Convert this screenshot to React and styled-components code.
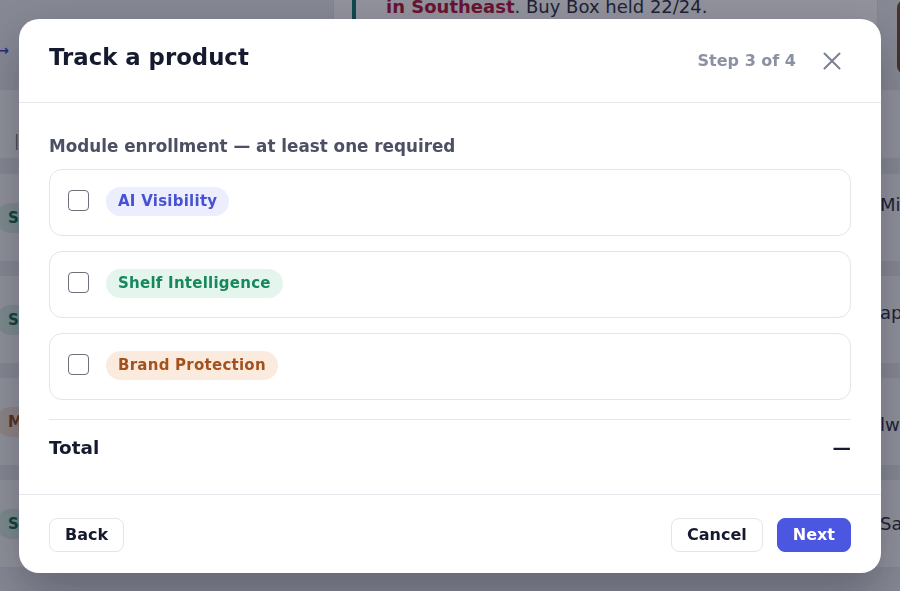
import React, { useState } from 'react';
import styled, { createGlobalStyle } from 'styled-components';

// styles
const Global = createGlobalStyle`
  html, body { margin: 0; padding: 0; }
  body {
    font-family: "DejaVu Sans", "Liberation Sans", sans-serif;
    background: #e7e9ef;
    overflow: hidden;
  }
  * { box-sizing: border-box; }
`

const Page = styled.div`
  width: 900px;
  height: 591px;
  display: flex;
  flex-direction: column;
  overflow: hidden;
`
const TopArea = styled.div`
  height: 70px;
  display: flex;
  align-items: flex-start;
`
const BackLinkCol = styled.div`
  flex-shrink: 0;
  width: 9px;
  margin-top: 42px;
  overflow: hidden;
  display: flex;
  justify-content: flex-end;
  white-space: nowrap;
  color: #3d45c9;
  font-size: 14px;
  font-weight: bold;
`
const AlertCard = styled.div`
  flex-shrink: 0;
  margin-left: 324px;
  width: 545px;
  height: 64px;
  background: #fbfbfd;
  border: 1px solid #dfe2e8;
  border-top: 0;
  padding: 0 0 0 18px;
  display: flex;
`
const AlertBody = styled.div`
  border-left: 4px solid #0f766e;
  padding: 0 0 0 30px;
  margin-top: -6px;
  font-size: 18px;
  line-height: 26px;
  color: #2b2f45;
  strong { color: #b3123c; }
`
const Avatar = styled.div`
  flex-shrink: 0;
  margin-left: 19px;
  width: 40px;
  height: 74px;
  border-radius: 8px;
  background: #7a4a2c;
`
const HeadRow = styled.div`
  margin-top: 20px;
  height: 68px;
  background: #fafbfc;
  display: flex;
  align-items: center;
  padding: 32px 0 0 14px;
  color: #777;
`
const Rows = styled.div`
  margin-top: 16px;
  display: flex;
  flex-direction: column;
  gap: 15px;
`
const BgRow = styled.div`
  height: 87px;
  background: #fafbfc;
  display: flex;
  align-items: center;
`
const StatusPill = styled.span`
  margin-left: -4px;
  width: 120px;
  height: 30px;
  border-radius: 15px;
  padding-left: 12px;
  display: flex;
  align-items: center;
  font-size: 15px;
  font-weight: bold;
  color: ${p => p.$tone === 'm' ? '#9a4b1c' : '#0f6e55'};
  background: ${p => p.$tone === 'm' ? '#f6e3d6' : '#d8efe6'};
`
const BgText = styled.span`
  margin-left: auto;
  margin-bottom: ${p => p.$lift}px;
  width: 20px;
  overflow: hidden;
  white-space: nowrap;
  font-size: 18px;
  color: #2b2f45;
`

const Overlay = styled.div`
  position: fixed;
  inset: 0;
  background: rgba(18, 20, 38, 0.45);
  display: flex;
  align-items: center;
  justify-content: center;
`
const Modal = styled.div`
  width: 862px;
  background: #fff;
  border-radius: 20px;
  box-shadow: 0 20px 50px rgba(10, 12, 30, 0.3);
  overflow: hidden;
`
const Header = styled.div`
  height: 84px;
  border-bottom: 1px solid #e4e6ec;
  display: flex;
  align-items: center;
  padding: 0 30px;
`
const Title = styled.h2`
  margin: 0 0 6px;
  font-size: 22.8px;
  font-weight: bold;
  color: #151a2e;
`
const Step = styled.span`
  margin-left: auto;
  font-size: 16px;
  font-weight: bold;
  color: #8b90a3;
`
const CloseBtn = styled.button`
  margin: 2px 9px 0 25px;
  width: 21px;
  height: 21px;
  padding: 0;
  border: 0;
  background: none;
  color: #7b8091;
  display: flex;
  align-items: center;
  justify-content: center;
  cursor: pointer;
`
const Body = styled.div`
  padding: 33px 30px 0;
`
const Label = styled.div`
  font-size: 16.8px;
  line-height: 20px;
  font-weight: bold;
  color: #4b5064;
  margin-bottom: 13px;
`
const ModuleList = styled.div`
  display: flex;
  flex-direction: column;
  gap: 15px;
`
const ModuleRow = styled.label`
  height: 67px;
  border: 1.5px solid #e3e5ea;
  border-radius: 13px;
  display: flex;
  align-items: center;
  padding: 0 0 0 18px;
  cursor: pointer;
`
const Check = styled.input`
  appearance: none;
  margin: 0 17px 4px 0;
  width: 21px;
  height: 21px;
  border: 1.5px solid #6d707b;
  border-radius: 4px;
  background: #fff;
  &:checked { background: #4b57e0; border-color: #4b57e0; }
`
const tones = {
  ai: { bg: '#ecedfd', fg: '#4751d4' },
  shelf: { bg: '#e4f5ee', fg: '#17875c' },
  brand: { bg: '#fbebdf', fg: '#a4521d' },
}
const Pill = styled.span`
  height: 29px;
  margin-bottom: 2px;
  padding: 0 12px;
  border-radius: 15px;
  display: inline-flex;
  align-items: center;
  font-size: 15px;
  font-weight: bold;
  letter-spacing: 0.25px;
  background: ${p => tones[p.$tone].bg};
  color: ${p => tones[p.$tone].fg};
`
const TotalRow = styled.div`
  margin-top: 19px;
  border-top: 1.5px solid #e4e6ec;
  display: flex;
  align-items: center;
  justify-content: space-between;
  padding: 16px 0 34px;
  font-size: 18.4px;
  line-height: 24px;
  font-weight: bold;
  color: #151a2e;
`
const Footer = styled.div`
  border-top: 1px solid #e4e6ec;
  padding: 23px 30px 21px;
  display: flex;
  align-items: center;
  gap: 14px;
`
const Button = styled.button`
  height: 34px;
  padding: 0 15px;
  border-radius: 8px;
  font-family: inherit;
  font-size: 16px;
  font-weight: bold;
  cursor: pointer;
  border: 1.5px solid ${p => p.$primary ? '#4b57e0' : '#e3e5ea'};
  background: ${p => p.$primary ? '#4b57e0' : '#fff'};
  color: ${p => p.$primary ? '#fff' : '#151a2e'};
  ${p => p.$push && 'margin-left: auto;'}
`

const modules = [
  { id: 'ai', name: 'AI Visibility' },
  { id: 'shelf', name: 'Shelf Intelligence' },
  { id: 'brand', name: 'Brand Protection' },
]

const bgRows = [
  { tone: 's', tag: 'Shelf', text: 'Microsoft', lift: 26 },
  { tone: 's', tag: 'Shelf', text: 'apparel', lift: 14 },
  { tone: 'm', tag: 'Monitor', text: 'lwear', lift: -6 },
  { tone: 's', tag: 'Shelf', text: 'Sage', lift: 0 },
]

const Background = () => (
  <Page>
    <TopArea>
      <BackLinkCol>All products →</BackLinkCol>
      <AlertCard>
        <AlertBody><strong>in Southeast</strong>. Buy Box held 22/24.</AlertBody>
      </AlertCard>
      <Avatar />
    </TopArea>
    <HeadRow>|</HeadRow>
    <Rows>
      {bgRows.map((r, i) => (
        <BgRow key={i}>
          <StatusPill $tone={r.tone}>{r.tag}</StatusPill>
          <BgText $lift={r.lift}>{r.text}</BgText>
        </BgRow>
      ))}
    </Rows>
  </Page>
)

const App = () => {
  const [picked, setPicked] = useState({});

  const toggle = id => setPicked(p => ({ ...p, [id]: !p[id] }));

  return (
    <>
      <Global />
      <Background />
      <Overlay>
        <Modal>
          <Header>
            <Title>Track a product</Title>
            <Step>Step 3 of 4</Step>
            <CloseBtn aria-label="Close">
              <svg width="18" height="18" viewBox="0 0 18 18" fill="none" stroke="currentColor" strokeWidth="2" strokeLinecap="round">
                <path d="M1.5 1.5l15 15M16.5 1.5l-15 15" />
              </svg>
            </CloseBtn>
          </Header>
          <Body>
            <Label>Module enrollment — at least one required</Label>
            <ModuleList>
              {modules.map(m => (
                <ModuleRow key={m.id}>
                  <Check type="checkbox" checked={!!picked[m.id]} onChange={() => toggle(m.id)} />
                  <Pill $tone={m.id}>{m.name}</Pill>
                </ModuleRow>
              ))}
            </ModuleList>
            <TotalRow>
              <span>Total</span>
              <span>—</span>
            </TotalRow>
          </Body>
          <Footer>
            <Button>Back</Button>
            <Button $push>Cancel</Button>
            <Button $primary>Next</Button>
          </Footer>
        </Modal>
      </Overlay>
    </>
  )
}

export default App
